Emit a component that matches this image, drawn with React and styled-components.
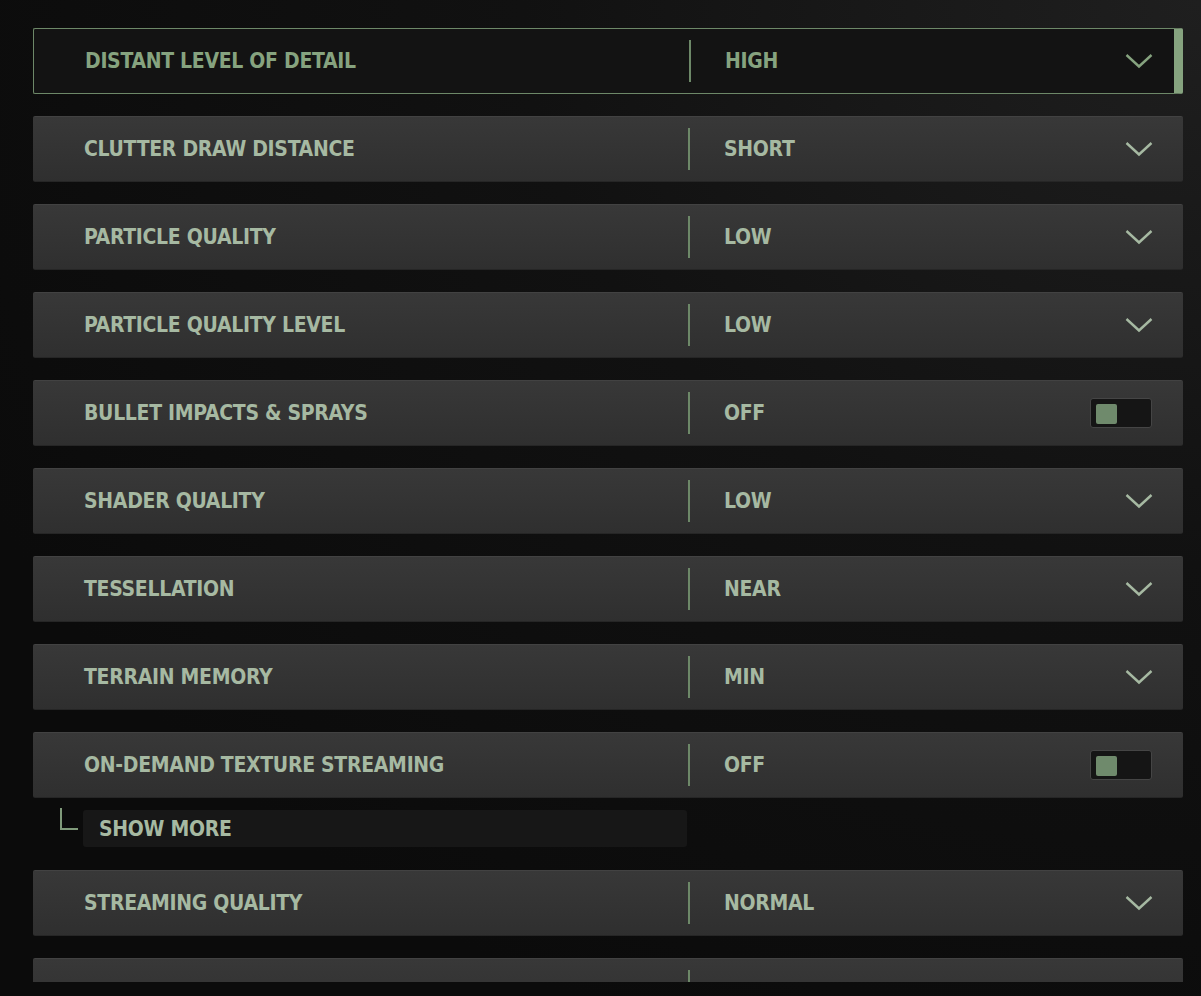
import React from "react";
import styled, { createGlobalStyle, css } from "styled-components";

const GlobalStyle = createGlobalStyle`
  html, body {
    margin: 0;
    padding: 0;
    height: 100%;
    overflow: hidden;
  }
  body {
    background: radial-gradient(ellipse at 100% 0%, #1f1f1f 0%, #111 40%, #0b0b0b 80%);
    font-family: "DejaVu Sans Condensed", "Liberation Sans", sans-serif;
  }
`;

const Page = styled.div`
  width: 1201px;
  height: 982px;
  box-sizing: border-box;
  padding: 28px 18px 0 33px;
  display: flex;
  flex-direction: column;
  gap: 22px;
  overflow: hidden;
`;

const Row = styled.div`
  position: relative;
  flex: none;
  width: 1150px;
  height: 66px;
  box-sizing: border-box;
  display: flex;
  align-items: center;
  border-radius: 2px;
  background: linear-gradient(#383838, #2f2f2f);
  border-top: 1px solid #424242;
  border-bottom: 1px solid #262626;
  ${(p) =>
    p.$active &&
    css`
      background: #131313;
      border: 1px solid #6d8868;
      border-right: 9px solid #86a37f;
    `}
`;

const Label = styled.div`
  width: 655px;
  padding-left: 51px;
  box-sizing: border-box;
  font-size: 21px;
  font-weight: 700;
  letter-spacing: -0.3px;
  color: ${(p) => (p.$active ? "#86a37f" : "#a6b9a2")};
  white-space: nowrap;
`;

const Divider = styled.div`
  width: 2px;
  height: 42px;
  background: #6d8868;
  margin-right: 34px;
`;

const Value = styled.div`
  flex: 1;
  font-size: 21px;
  font-weight: 700;
  letter-spacing: -0.3px;
  color: ${(p) => (p.$active ? "#86a37f" : "#a6b9a2")};
`;

const Chevron = styled.svg`
  width: 28px;
  height: 16px;
  margin-right: ${(p) => (p.$active ? "21px" : "30px")};
`;

const Toggle = styled.div`
  width: 62px;
  height: 30px;
  box-sizing: border-box;
  margin-right: 31px;
  border-radius: 3px;
  background: #151515;
  border: 1px solid #454545;
  padding: 5px 0 0 5px;
`;

const Knob = styled.div`
  width: 21px;
  height: 20px;
  border-radius: 2px;
  background: #6f8a6c;
`;

const MoreRow = styled.div`
  display: flex;
  align-items: flex-start;
  margin: -10px 0 1px 27px;
  height: 37px;
`;

const Corner = styled.div`
  width: 16px;
  height: 20px;
  border-left: 2px solid #7f9a7a;
  border-bottom: 2px solid #7f9a7a;
  margin: -2px 5px 0 0;
`;

const MoreBox = styled.div`
  width: 604px;
  height: 37px;
  box-sizing: border-box;
  background: #171717;
  border-radius: 3px;
  padding-left: 16px;
  display: flex;
  align-items: center;
  font-size: 21px;
  font-weight: 700;
  letter-spacing: -0.3px;
  color: #a6b9a2;
`;

const rows = [
  { label: "DISTANT LEVEL OF DETAIL", value: "HIGH", active: true },
  { label: "CLUTTER DRAW DISTANCE", value: "SHORT" },
  { label: "PARTICLE QUALITY", value: "LOW" },
  { label: "PARTICLE QUALITY LEVEL", value: "LOW" },
  { label: "BULLET IMPACTS & SPRAYS", value: "OFF", toggle: true },
  { label: "SHADER QUALITY", value: "LOW" },
  { label: "TESSELLATION", value: "NEAR" },
  { label: "TERRAIN MEMORY", value: "MIN" },
  { label: "ON-DEMAND TEXTURE STREAMING", value: "OFF", toggle: true, more: true },
  { label: "STREAMING QUALITY", value: "NORMAL" },
  { label: "", value: "" },
];

const SettingRow = ({ label, value, active, toggle }) => (
  <Row $active={active}>
    <Label $active={active}>{label}</Label>
    <Divider />
    <Value $active={active}>{value}</Value>
    {label &&
      (toggle ? (
        <Toggle>
          <Knob />
        </Toggle>
      ) : (
        <Chevron $active={active} viewBox="0 0 28 16">
          <path
            d="M1.5 2 L14 13.5 L26.5 2"
            fill="none"
            stroke={active ? "#86a37f" : "#a6b9a2"}
            strokeWidth="2.4"
          />
        </Chevron>
      ))}
  </Row>
);

export default function App() {
  return (
    <>
      <GlobalStyle />
      <Page>
        {rows.map((r, i) => (
          <React.Fragment key={i}>
            <SettingRow {...r} />
            {r.more && (
              <MoreRow>
                <Corner />
                <MoreBox>SHOW MORE</MoreBox>
              </MoreRow>
            )}
          </React.Fragment>
        ))}
      </Page>
    </>
  );
}
